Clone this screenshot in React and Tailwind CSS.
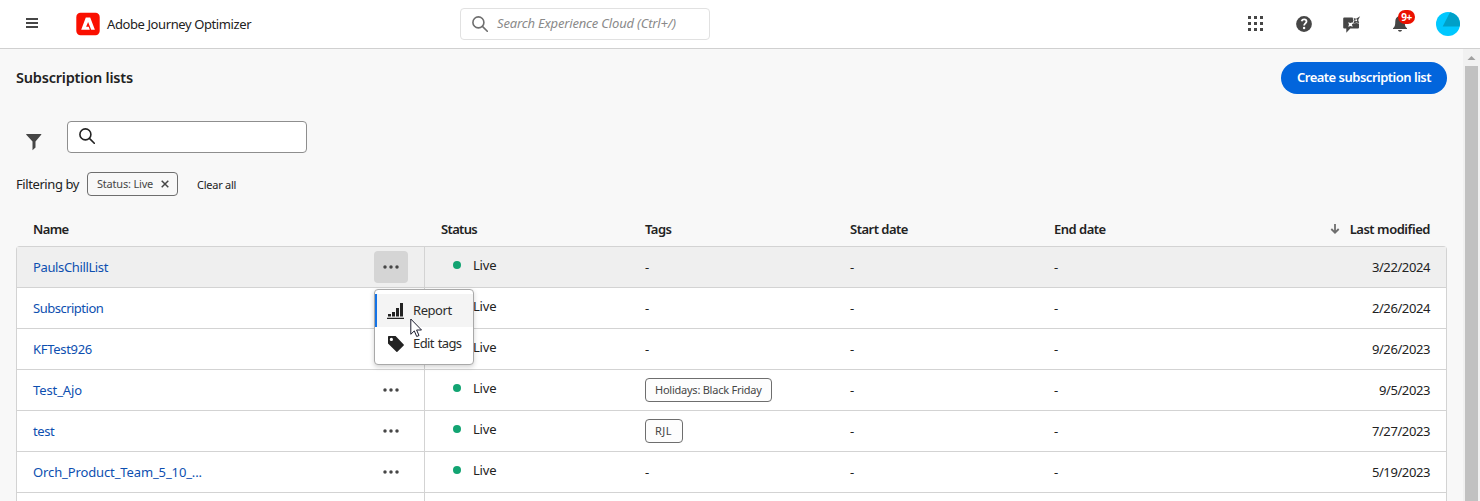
import React from 'react';

const rows = [
  { name: 'PaulsChillList', track: 'tracking-[-0.37px]', date: '3/22/2024', active: true },
  { name: 'Subscription', track: 'tracking-[-0.5px]', date: '2/26/2024' },
  { name: 'KFTest926', track: 'tracking-[-0.3px]', date: '9/26/2023' },
  { name: 'Test_Ajo', track: 'tracking-[-0.1px]', date: '9/5/2023', tag: 'Holidays: Black Friday', tagTrack: 'tracking-[-0.24px] w-[127px]' },
  { name: 'test', track: 'tracking-[-0.45px]', date: '7/27/2023', tag: 'RJL', tagTrack: 'tracking-[0.4px] w-[38px]' },
  { name: 'Orch_Product_Team_5_10_...', track: 'tracking-[-0.12px]', date: '5/19/2023' },
  { name: '', track: '', date: '', empty: true },
];

const COLS = 'grid grid-cols-[408px_204px_205px_204px_1fr]';

function SearchIcon({ className }) {
  return (
    <svg className={className} width="16" height="16" viewBox="0 0 16 16" fill="none" stroke="currentColor" strokeWidth="1.6">
      <circle cx="6.4" cy="6.4" r="5.5" />
      <path d="M10.4 10.4 15.3 15.3" strokeLinecap="round" />
    </svg>
  );
}

function MoreIcon() {
  return (
    <svg width="16" height="4" viewBox="0 0 16 4" className="fill-[#464646]">
      <circle cx="2" cy="2" r="1.75" />
      <circle cx="8" cy="2" r="1.75" />
      <circle cx="14" cy="2" r="1.75" />
    </svg>
  );
}

function TopBar() {
  return (
    <header className="flex h-[49px] shrink-0 items-center border-b border-[#d0d0d0] bg-white pr-5 pb-px pl-[26px]">
      <svg width="12" height="10" viewBox="0 0 12 10" className="-mt-px fill-[#464646]">
        <path d="M0 0h12v2H0zM0 4h12v2H0zM0 8h12v2H0z" />
      </svg>
      <svg width="24" height="24" viewBox="0 0 24 24" className="ml-[38px]">
        <rect x="0.3" y="0.8" width="23.4" height="22.4" rx="4.2" fill="#fa0f00" />
        <path d="M9.800 5.600h4.400l4.700 12.100h-3.700L12.100 9.900l-2 4.900h2.600l1.100 2.900H5.200z" fill="#fff" />
      </svg>
      <span className="ml-[7px] w-[353px] text-[13px] tracking-[-0.4px] text-[#222]">Adobe Journey Optimizer</span>
      <div className="flex h-8 w-[250px] items-center rounded-sm border border-[#e1e1e1] pl-[11px]">
        <SearchIcon className="text-[#6e6e6e]" />
        <span className="ml-[9px] pb-0.5 text-[13px] tracking-[-0.17px] text-[#8a8a8a] italic">Search Experience Cloud (Ctrl+/)</span>
      </div>
      <div className="ml-auto flex items-center text-[#464646]">
        <svg width="15" height="15" viewBox="0 0 15 15" fill="currentColor">
          <path d="M0 0h3v3H0zM6 0h3v3H6zM12 0h3v3h-3zM0 6h3v3H0zM6 6h3v3H6zM12 6h3v3h-3zM0 12h3v3H0zM6 12h3v3H6zM12 12h3v3h-3z" />
        </svg>
        <svg width="16" height="16" viewBox="0 0 16 16" className="ml-[33px]">
          <circle cx="8" cy="8" r="7.9" fill="currentColor" />
          <path d="M5.600 5.200C6 3.900 7 3.400 8.100 3.400c1.400 0 2.400.8 2.400 2.100 0 1.800-2.400 2-2.400 4" fill="none" stroke="#fff" strokeWidth="1.8" />
          <circle cx="8.1" cy="12" r="1.2" fill="#fff" />
        </svg>
        <svg width="18" height="18" viewBox="0 0 18 18" className="ml-[31px]">
          <path d="M1.200 2.500H10l2.200 3.500L16 7v5.500a1 1 0 0 1-1 1H7.300L3.300 17.700v-4.200H1.200a1 1 0 0 1-1-1v-9a1 1 0 0 1 1-1z" fill="currentColor" />
          <path d="M5.200 7.300l2.200.8 2.300-.9-.8 2.300.8 2.200-2.200-.8-2.300.9.800-2.300z" fill="#fff" />
          <path d="M9.500 2l2.200.6L17.300 0l-1.500 4.200 1.300 4.600-4-.8-4.300 1.200 1.700-3.400z" fill="#fff" />
          <path d="M10.600 3l2.500.7 4-2.400-1.900 3.800 1 3-3-.7-3.200 1.500 1.500-3.200z" fill="currentColor" />
          <circle cx="13.200" cy="5.300" r="1" fill="#fff" />
        </svg>
        <div className="relative ml-[32px] h-[17px] w-[14px]">
          <svg width="14" height="17" viewBox="0 0 14 17" fill="currentColor">
            <path d="M7 0c.8 0 1.300.5 1.300 1.200C10.700 2 11.700 4 11.700 6.500c0 4 .7 5.500 2.300 6.700V14H0v-.8C1.600 12 2.300 10.500 2.300 6.500 2.300 4 3.300 2 5.700 1.200 5.700.5 6.200 0 7 0zM5 15h4c-.2 1.200-1 1.700-2 1.700S5.200 16.200 5 15z" />
          </svg>
          <span className="absolute -top-[5px] left-[5px] flex h-[14px] w-[17px] items-center justify-center rounded-full bg-[#eb1000] text-[10px] font-bold tracking-[-0.4px] text-white">9+</span>
        </div>
        <svg width="24" height="24" viewBox="0 0 24 24" className="ml-[29px]">
          <circle cx="12" cy="12" r="12" fill="#00c8ff" />
          <path d="M14 .2 6.700 14.600 23.700 14.600A12 12 0 0 0 14 .2z" fill="#00a0c8" />
        </svg>
      </div>
    </header>
  );
}

function Pointer() {
  return (
    <svg width="13" height="20" viewBox="0 0 13 20" className="absolute top-[28px] left-[35px]">
      <path d="M.8 1v15.300l3.500-3.400 2.400 5.600 2.300-1-2.400-5.500h4.900z" fill="#fff" stroke="#1c1c2e" strokeWidth="1" />
    </svg>
  );
}

function ActionMenu() {
  return (
    <div className="absolute top-[38px] left-0 z-10 h-[76px] w-[100px] rounded-sm border border-[#a9a9a9] bg-white py-1 text-[13px] text-[#2c2c2c] shadow-[0_2px_5px_rgba(0,0,0,0.18)]">
      <div className="flex h-[33px] items-center border-l-2 border-[#1473e6] bg-[#f4f4f4] pl-[10px]">
        <svg width="17" height="16" viewBox="0 0 17 16" className="fill-[#222]">
          <path d="M0 14.700h17V16H0zM1 11h3v2.500H1zM5 9h3v4.500H5zM9 5h3v8.500H9zM13 0h3v13.500h-3z" />
        </svg>
        <span className="ml-[9px] pb-0.5 tracking-[-0.45px]">Report</span>
      </div>
      <div className="flex h-[33px] items-center pl-3">
        <svg width="18" height="18" viewBox="0 0 18 18" className="fill-[#222]">
          <path fillRule="evenodd" d="M1 1.700A.7.7 0 0 1 1.700 1H8.600l8.100 8.400a.7.7 0 0 1 0 1l-6.300 6.300a.7.7 0 0 1-1 0L1 8.600zM4.400 2.800a1.600 1.600 0 1 0 0 3.200 1.600 1.600 0 0 0 0-3.200z" />
        </svg>
        <span className="ml-2 pb-0.5 tracking-[-0.6px] [word-spacing:1px]">Edit tags</span>
      </div>
      <Pointer />
    </div>
  );
}

function Row({ row }) {
  return (
    <div className={`${COLS} h-[41px] border-b border-[#d3d3d3] text-[13px] ${row.active ? 'bg-[#efefef]' : 'bg-white'}`}>
      <div className="flex items-center justify-between border-r border-[#d3d3d3] pr-4 pl-4">
        <span className={`text-[#0d4fb0] ${row.track}`}>{row.name}</span>
        {!row.empty && (
          <div className={`relative flex h-8 w-[34px] items-center justify-center rounded-sm ${row.active ? 'bg-[#d5d5d5]' : ''}`}>
            <MoreIcon />
            {row.active && <ActionMenu />}
          </div>
        )}
      </div>
      {!row.empty && (
        <>
          <div className="flex items-center pb-1 pl-7">
            <span className="size-2 rounded-full bg-[#12a472]" />
            <span className="ml-3 tracking-[-0.2px] text-[#222]">Live</span>
          </div>
          <div className="flex items-center pl-4 text-[#222]">
            {row.tag ? (
              <span className={`flex h-6 items-center rounded-sm border border-[#6e6e6e] bg-[#fdfdfd] pl-[9px] text-[11px] text-[#464646] ${row.tagTrack}`}>{row.tag}</span>
            ) : '-'}
          </div>
          <div className="flex items-center pl-4 text-[#222]">-</div>
          <div className="flex items-center justify-between pr-4 pl-4 text-[#222]">
            <span>-</span>
            <span className="tracking-[-0.4px]">{row.date}</span>
          </div>
        </>
      )}
    </div>
  );
}

function Table() {
  return (
    <div className="mt-[17px] w-[1431px]">
      <div className={`${COLS} h-[33px] items-center px-px pb-0.5 text-[13px] font-semibold text-[#222]`}>
        <span className="pl-4 tracking-[-0.6px]">Name</span>
        <span className="pl-4 tracking-[-0.65px]">Status</span>
        <span className="pl-4 tracking-[-0.5px]">Tags</span>
        <span className="pl-4 tracking-[-0.5px]">Start date</span>
        <div className="flex items-center justify-between pr-4 pl-4">
          <span className="tracking-[-0.5px]">End date</span>
          <span className="flex items-center gap-[10px] tracking-[-0.46px]">
            <svg width="10" height="10" viewBox="0 0 10 10" fill="none" stroke="#6e6e6e" strokeWidth="1.8">
              <path d="M5 0v8.500M1.300 5 5 8.700 8.700 5" />
            </svg>
            Last modified
          </span>
        </div>
      </div>
      <div className="rounded-t-sm border border-b-0 border-[#d3d3d3]">
        {rows.map((row) => (
          <Row key={row.name || 'next'} row={row} />
        ))}
      </div>
    </div>
  );
}

function Scrollbar() {
  return (
    <div className="flex w-[17px] shrink-0 flex-col items-center bg-[#f1f1f1]">
      <svg width="17" height="17" viewBox="0 0 17 17" className="shrink-0 fill-[#a0a0a0]">
        <path d="M4.500 11 8.500 7l4 4z" />
      </svg>
      <div className="w-[13px] flex-1 bg-[#c1c1c1]" />
    </div>
  );
}

export default function App() {
  return (
    <div className="flex h-[501px] w-[1480px] flex-col overflow-hidden bg-[#f8f8f8] font-['Noto_Sans',sans-serif] leading-[18px] whitespace-nowrap">
      <TopBar />
      <div className="flex min-h-0 flex-1">
        <main className="min-w-0 flex-1 overflow-hidden pt-[13px] pr-4 pl-4">
          <div className="flex h-8 items-center justify-between">
            <h1 className="pb-[3px] text-[14.5px] font-semibold tracking-[-0.2px] text-[#222]">Subscription lists</h1>
            <button className="h-8 w-[166px] rounded-full bg-[#0265dc] pb-0.5 text-[13px] font-semibold tracking-[-0.5px] text-white">Create subscription list</button>
          </div>
          <div className="mt-[27px] flex h-8">
            <svg width="16" height="18" viewBox="0 0 16 18" className="mt-3 ml-[10px] fill-[#464646]">
              <path d="M.5 1h14.500c.4 0 .5.400.2.700L9.500 8.500v6l-3 2.800V8.500L.3 1.700C0 1.400.1 1 .5 1z" />
            </svg>
            <div className="ml-[25px] flex h-8 w-60 rounded-sm border border-[#8e8e8e] bg-white pt-1.5 pl-[11px]">
              <SearchIcon className="text-[#222]" />
            </div>
          </div>
          <div className="mt-[19px] flex h-6 items-center text-[#222]">
            <span className="w-[71px] text-[13px] tracking-[-0.42px]">Filtering by</span>
            <span className="flex h-6 w-[91px] items-center justify-between rounded-sm border border-[#6e6e6e] pr-2 pl-[9px] text-[11px] text-[#464646]">
              <span className="tracking-[-0.2px]">Status: Live</span>
              <svg width="8" height="8" viewBox="0 0 8 8" fill="none" stroke="#464646" strokeWidth="1.5">
                <path d="M.7.7 7.300 7.300M7.300.7.7 7.300" />
              </svg>
            </span>
            <span className="ml-[19px] pt-px text-[11px] tracking-[-0.25px]">Clear all</span>
          </div>
          <Table />
        </main>
        <Scrollbar />
      </div>
    </div>
  );
}
